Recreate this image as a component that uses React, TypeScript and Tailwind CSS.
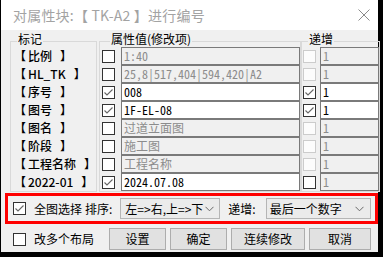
import React from 'react';

type Row = {
  label: string;
  on: boolean;
  value: string;
  live: boolean;
  incOn: boolean;
  incLive: boolean;
  incValLive: boolean;
};

const rows: Row[] = [
  { label: '比例', on: false, value: '1:40', live: false, incOn: false, incLive: false, incValLive: false },
  { label: 'HL_TK', on: false, value: '25,8|517,404|594,420|A2', live: false, incOn: false, incLive: false, incValLive: false },
  { label: '序号', on: true, value: '008', live: true, incOn: true, incLive: true, incValLive: true },
  { label: '图号', on: true, value: '1F-EL-08', live: true, incOn: true, incLive: true, incValLive: true },
  { label: '图名', on: false, value: '过道立面图', live: false, incOn: false, incLive: false, incValLive: false },
  { label: '阶段', on: false, value: '施工图', live: false, incOn: false, incLive: false, incValLive: false },
  { label: '工程名称', on: false, value: '工程名称', live: false, incOn: false, incLive: false, incValLive: false },
  { label: '2022-01', on: true, value: '2024.07.08', live: true, incOn: false, incLive: true, incValLive: false },
];

const ui = { fontFamily: '"Noto Sans CJK SC", "Noto Sans", sans-serif' };
const mono = { fontFamily: '"Noto Sans Mono CJK SC", "Noto Sans CJK SC", monospace' };

function Check({ on, live = true }: { on: boolean; live?: boolean }) {
  return (
    <div
      className={`w-[13px] h-[13px] shrink-0 border flex items-center justify-center ${
        live ? 'border-[#333333] bg-white' : 'border-[#cccccc] bg-[#fcfcfc]'
      }`}
    >
      {on && (
        <svg width="11" height="11" viewBox="0 0 11 11">
          <polyline points="1.5,5.5 4,8 9.5,2.5" fill="none" stroke="#666666" strokeWidth="1.1" />
        </svg>
      )}
    </div>
  );
}

function Field({ value, live, w }: { value: string; live: boolean; w: string }) {
  return (
    <div
      style={mono}
      className={`${w} h-[18px] shrink-0 border border-[#7a7a7a] px-[2px] flex items-center text-[12px] leading-[16px] whitespace-nowrap overflow-hidden ${
        live ? 'bg-white text-black' : 'bg-[#f0f0f0] text-[#8c8c8c]'
      }`}
    >
      {value}
    </div>
  );
}

function Chevron() {
  return (
    <svg width="9" height="6" viewBox="0 0 9 6">
      <polyline points="0.5,0.8 4.5,4.8 8.5,0.8" fill="none" stroke="#6a6a6a" strokeWidth="1" />
    </svg>
  );
}

export default function App() {
  return (
    <div className="w-[383px] h-[257px] bg-black overflow-hidden" style={ui}>
      <div className="ml-[1px] w-[377px] h-[252px] bg-[#f0f0f0] flex flex-col">
        {/* title bar */}
        <div className="h-[30px] bg-white flex items-center justify-between pl-[12px] pr-[8px]">
          <span className="text-[14px] text-[#a3a3a3] tracking-[0.2px]">对属性块:【 TK-A2 】进行编号</span>
          <svg width="12" height="12" viewBox="0 0 12 12">
            <line x1="0.5" y1="0.5" x2="11.5" y2="11.5" stroke="#8a8a8a" strokeWidth="1" />
            <line x1="11.5" y1="0.5" x2="0.5" y2="11.5" stroke="#8a8a8a" strokeWidth="1" />
          </svg>
        </div>

        {/* group boxes */}
        <div className="flex mt-[2px] ml-[9px] text-[12px] text-black">
          <fieldset className="w-[83px] h-[160px] border border-[#d9d9d9] pl-[1px]">
            <legend className="ml-[5px] px-[1px] pb-[5px] leading-[14px]">标记</legend>
            <div className="-mt-[4px] flex flex-col">
              {rows.map((r) => (
                <div key={r.label} className="h-[18px] flex items-center pl-[2px] font-medium whitespace-nowrap">
                  <span className="w-[14px]">【</span>
                  <span>{r.label}</span>
                  <span className="ml-[8px]">】</span>
                </div>
              ))}
            </div>
          </fieldset>

          <fieldset className="ml-[2px] w-[202px] h-[160px] border border-[#d9d9d9] pl-[2px]">
            <legend className="ml-[8px] px-[1px] pb-[5px] leading-[14px]">属性值(修改项)</legend>
            <div className="-mt-[4px] flex flex-col">
              {rows.map((r) => (
                <div key={r.label} className="h-[18px] flex items-center gap-[6px]">
                  <Check on={r.on} />
                  <Field value={r.value} live={r.live} w="w-[179px]" />
                </div>
              ))}
            </div>
          </fieldset>

          <fieldset className="w-[80px] h-[160px] border border-[#d9d9d9] pl-[1px]">
            <legend className="ml-[5px] px-[1px] pb-[5px] leading-[14px]">递增</legend>
            <div className="-mt-[4px] flex flex-col">
              {rows.map((r) => (
                <div key={r.label} className="h-[18px] flex items-center gap-[4px]">
                  <Check on={r.incOn} live={r.incLive} />
                  <Field value="1" live={r.incValLive} w="w-[59px]" />
                </div>
              ))}
            </div>
          </fieldset>
        </div>

        {/* highlighted options */}
        <div className="mt-[1px] ml-[4px] w-[373px] h-[31px] border-[3px] border-[#ff0000] flex items-center pl-[5px] text-[12px] text-black">
          <Check on={true} />
          <span className="ml-[8px]">全图选择</span>
          <span className="ml-[3px]">排序:</span>
          <div className="ml-[8px] w-[100px] h-[21px] border border-[#b5b5b5] bg-[#ebebeb] flex items-center justify-between pl-[4px] pr-[5px]">
            <span>左=&gt;右,上=&gt;下</span>
            <Chevron />
          </div>
          <span className="ml-[8px]">递增:</span>
          <div className="ml-[10px] w-[105px] h-[21px] border border-[#b5b5b5] bg-[#ebebeb] flex items-center justify-between pl-[3px] pr-[6px]">
            <span>最后一个数字</span>
            <Chevron />
          </div>
        </div>

        {/* bottom row */}
        <div className="mt-[3px] flex items-center pl-[12px] h-[24px] text-[12px] text-black">
          <Check on={false} />
          <span className="ml-[8px]">改多个布局</span>
          <div className="ml-[15px] w-[57px] h-[22px] border border-[#adadad] bg-[#e1e1e1] flex items-center justify-center">设置</div>
          <div className="ml-[4px] w-[57px] h-[22px] border border-[#adadad] bg-[#e1e1e1] flex items-center justify-center">确定</div>
          <div className="ml-[4px] w-[74px] h-[22px] border border-[#adadad] bg-[#e1e1e1] flex items-center justify-center">连续修改</div>
          <div className="ml-[4px] w-[62px] h-[22px] border border-[#adadad] bg-[#e1e1e1] flex items-center justify-center">取消</div>
        </div>
      </div>
    </div>
  );
}
